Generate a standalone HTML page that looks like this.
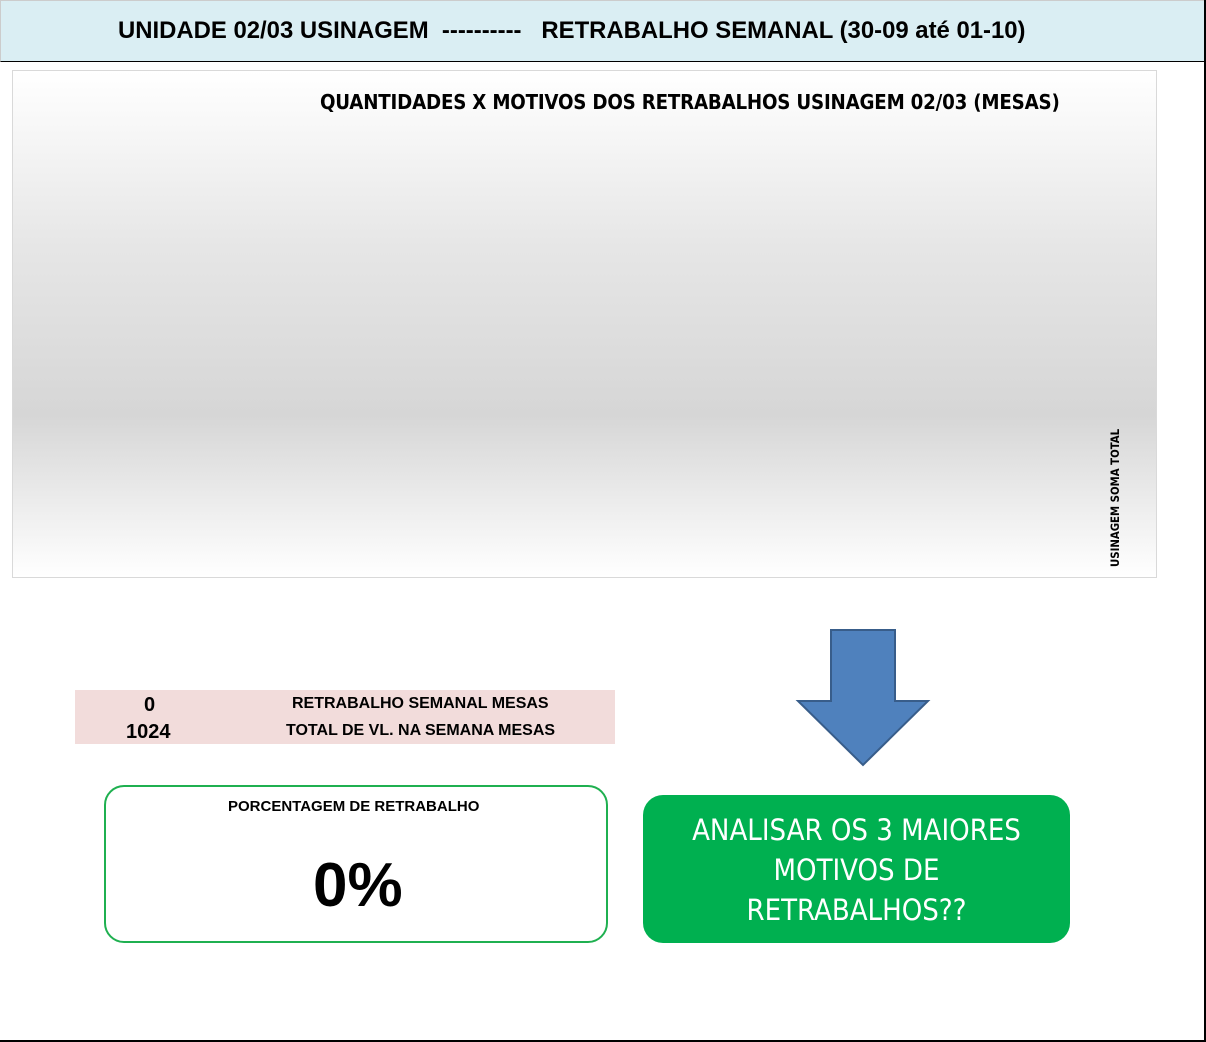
<!DOCTYPE html>
<html><head><meta charset="utf-8"><style>
body{margin:0;width:1206px;height:1042px;position:relative;background:#fff;font-family:"Liberation Sans",sans-serif;overflow:hidden}
.hdr{position:absolute;left:0;top:0;width:1204px;height:60px;background:#daeef3;border-bottom:1px solid #000;border-left:1px solid #ccc;border-top:1px solid #ccc}
.hdr div{position:absolute;left:117px;top:16px;font-weight:bold;font-size:23.9px;white-space:pre;color:#000}
.rb{position:absolute;left:1204px;top:0;width:2px;height:1042px;background:#000}
.bb{position:absolute;left:0;top:1040px;width:1206px;height:2px;background:#000}
.chart{position:absolute;left:12px;top:70px;width:1143px;height:506px;border:1px solid #d9d9d9;background:linear-gradient(#fff 0%,#f8f8f8 10%,#e6e6e6 35%,#d6d6d6 68%,#e8e8e8 82%,#fff 100%)}
.ct{position:absolute;left:307px;top:19px;font-weight:bold;font-size:20.3px;font-family:"DejaVu Sans Condensed","Liberation Sans",sans-serif;letter-spacing:-0.2px;white-space:nowrap}
.vt{position:absolute;left:1109px;top:567px;transform-origin:0 0;transform:rotate(-90deg);font-weight:bold;font-size:11.3px;white-space:nowrap;font-family:"DejaVu Sans Condensed",sans-serif}
.pink{position:absolute;left:75px;top:690px;width:540px;height:54px;background:#f2dcdb;font-weight:bold}
.pink div{position:absolute;white-space:nowrap}
.box{position:absolute;left:104px;top:785px;width:500px;height:154px;border:2px solid #1fb050;border-radius:20px}
.green{position:absolute;left:643px;top:795px;width:427px;height:148px;background:#00b050;border-radius:20px;color:#fff;text-align:center;font-size:29px;line-height:40px;font-family:"DejaVu Sans Condensed","Liberation Sans",sans-serif;padding-top:15px;box-sizing:border-box}
</style></head><body>
<div class="hdr"><div>UNIDADE 02/03 USINAGEM  ----------   RETRABALHO SEMANAL (30-09 até 01-10)</div></div>
<div class="rb"></div><div class="bb"></div>
<div class="chart"><div class="ct">QUANTIDADES X MOTIVOS DOS RETRABALHOS USINAGEM 02/03 (MESAS)</div></div>
<div class="vt">USINAGEM SOMA TOTAL</div>
<div class="pink">
<div style="left:69px;top:4px;font-size:20px">0</div>
<div style="left:217px;top:5px;font-size:16px">RETRABALHO SEMANAL MESAS</div>
<div style="left:51px;top:31px;font-size:20px">1024</div>
<div style="left:211px;top:32px;font-size:16px">TOTAL DE VL. NA SEMANA MESAS</div>
</div>
<div class="box">
<div style="position:absolute;left:122px;top:11px;font-weight:bold;font-size:15px">PORCENTAGEM DE RETRABALHO</div>
<div style="position:absolute;left:207px;top:63px;font-weight:bold;font-size:62px">0%</div>
</div>
<svg style="position:absolute;left:0;top:0" width="1206" height="1042"><polygon points="831,630 895,630 895,701 928,701 863,765 798,701 831,701" fill="#4f81bd" stroke="#385d8a" stroke-width="2"/></svg>
<div class="green">ANALISAR OS 3 MAIORES<br>MOTIVOS DE<br>RETRABALHOS??</div>
</body></html>
